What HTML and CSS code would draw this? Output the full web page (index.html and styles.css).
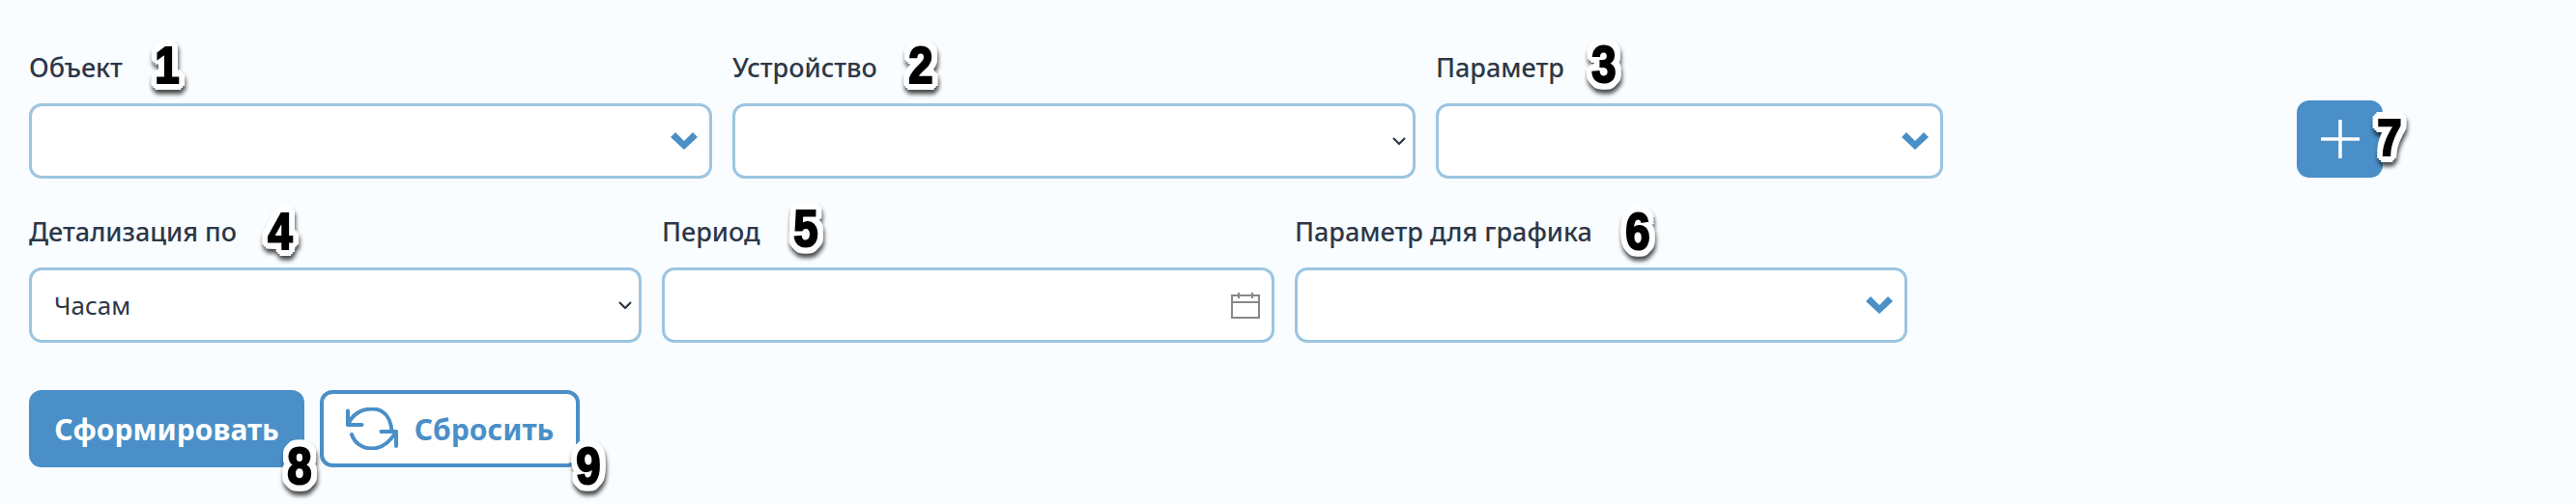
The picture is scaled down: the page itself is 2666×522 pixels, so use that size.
FILE: index.html
```html
<!DOCTYPE html>
<html lang="ru">
<head>
  <meta charset="UTF-8">
  <title>Отчёт</title>
  <link rel="stylesheet" href="styles.css">
</head>
<body>
  <main class="page">
    <!-- Row 1 -->
    <div class="row row-first">
      <div class="field field-wide">
        <label>Объект</label>
        <div class="box">
          <svg class="chevron" viewBox="0 0 28 18"><polygon points="0,5 5,0 14,9 23,0 28,5 14,18"/></svg>
        </div>
      </div>
      <div class="field field-wide">
        <label>Устройство</label>
        <div class="box box-native">
          <svg class="chevron-small" viewBox="0 0 14 8"><polyline points="1,1 7,7 13,1"/></svg>
        </div>
      </div>
      <div class="field field-param">
        <label>Параметр</label>
        <div class="box">
          <svg class="chevron" viewBox="0 0 28 18"><polygon points="0,5 5,0 14,9 23,0 28,5 14,18"/></svg>
        </div>
      </div>
      <button class="btn-add" type="button">
        <svg viewBox="0 0 40 40"><path d="M20 1V39M1 20H39"/></svg>
      </button>
    </div>

    <!-- Row 2 -->
    <div class="row">
      <div class="field field-mid">
        <label>Детализация по</label>
        <div class="box box-native">
          <span>Часам</span>
          <svg class="chevron-small" viewBox="0 0 14 8"><polyline points="1,1 7,7 13,1"/></svg>
        </div>
      </div>
      <div class="field field-mid">
        <label>Период</label>
        <div class="box box-date">
          <svg class="calendar" viewBox="0 0 30 28"><path d="M1 4H29V27H1ZM1 11H29M8 1V7M22 1V7"/></svg>
        </div>
      </div>
      <div class="field field-mid">
        <label>Параметр для графика</label>
        <div class="box">
          <svg class="chevron" viewBox="0 0 28 18"><polygon points="0,5 5,0 14,9 23,0 28,5 14,18"/></svg>
        </div>
      </div>
    </div>

    <!-- Buttons -->
    <div class="actions">
      <button class="btn btn-primary" type="button">Сформировать</button>
      <button class="btn btn-outline" type="button">
        <svg class="reset-icon" viewBox="0 0 54 44">
          <path d="M2 3.5V18H16.5M2 18C6 8 15 1.5 27 1.5C38 1.5 46 9 47.5 24M6 28C9 37 17 42.5 27 42.5C37 42.5 46 35 52 25M36.5 25H52V40"/>
        </svg>
        Сбросить
      </button>
    </div>

    <!-- Numbered callouts over the form -->
    <span class="badge badge-1">1</span>
    <span class="badge badge-2">2</span>
    <span class="badge badge-3">3</span>
    <span class="badge badge-4">4</span>
    <span class="badge badge-5">5</span>
    <span class="badge badge-6">6</span>
    <span class="badge badge-7">7</span>
    <span class="badge badge-8">8</span>
    <span class="badge badge-9">9</span>
  </main>
</body>
</html>
```

FILE: styles.css
```css
/* General Styles */
html, body {
  margin: 0;
  padding: 0;
  height: 100%;
  background: #f9fdff;
}
body {
  font-family: "Noto Sans", sans-serif;
  color: #2d3748;
  overflow: hidden;
}
.page {
  position: relative;
  padding: 52px 0 0 30px;
}
.row {
  display: flex;
  gap: 21px;
  margin-bottom: 37px;
}
label {
  display: block;
  font-size: 27px;
  font-weight: 500;
  line-height: 36px;
  margin-bottom: 19px;
}
.field-wide {
  width: 707px;
}
.field-param {
  width: 525px;
}
.field-mid {
  width: 634px;
}
.box {
  box-sizing: border-box;
  height: 78px;
  display: flex;
  align-items: center;
  justify-content: flex-end;
  padding: 0 12px;
  background: #fff;
  border: 3px solid #9cc5e1;
  border-radius: 13px;
  font-size: 26px;
}
.box-native {
  justify-content: space-between;
  padding: 0 7px 0 23px;
}
.box-date {
  padding-right: 12px;
}
.chevron {
  width: 28px;
  height: 18px;
  fill: #4a8fc7;
}
.chevron-small {
  width: 14px;
  height: 8px;
  margin-left: auto;
  fill: none;
  stroke: #2d3748;
  stroke-width: 2.2;
}
.calendar {
  width: 30px;
  height: 28px;
  fill: none;
  stroke: #888;
  stroke-width: 2;
}

/* Buttons */
.btn-add {
  display: flex;
  align-items: center;
  justify-content: center;
  width: 89px;
  height: 80px;
  margin: auto 0 1px 345px;
  padding: 0;
  background: #4a8fc7;
  border: none;
  border-radius: 13px;
}
.btn-add svg {
  width: 40px;
  height: 40px;
  fill: none;
  stroke: #fff;
  stroke-width: 3.5;
  stroke-linecap: round;
}
.actions {
  display: flex;
  gap: 16px;
  margin-top: 49px;
}
.btn {
  box-sizing: border-box;
  display: flex;
  align-items: center;
  justify-content: center;
  height: 80px;
  padding: 0;
  border-radius: 13px;
  font-family: inherit;
  font-size: 30px;
  font-weight: 700;
}
.btn-primary {
  width: 285px;
  background: #4a8fc7;
  border: none;
  color: #fff;
}
.btn-outline {
  width: 269px;
  gap: 17px;
  background: #fff;
  border: 4px solid #4a8fc7;
  color: #4a8fc7;
}
.reset-icon {
  width: 54px;
  height: 44px;
  fill: none;
  stroke: #4a8fc7;
  stroke-width: 4;
  stroke-linecap: round;
  stroke-linejoin: round;
}

/* Callouts */
.badge {
  position: absolute;
  transform: translate(-50%, -50%) scale(0.95, 1.1);
  font-family: "Liberation Sans", sans-serif;
  font-size: 48px;
  font-weight: 700;
  line-height: 1;
  color: #000;
  -webkit-text-stroke: 2px #000;
  text-shadow:
    7px 0 0 #fff, -7px 0 0 #fff, 0 7px 0 #fff, 0 -7px 0 #fff,
    5px 5px 0 #fff, -5px 5px 0 #fff, 5px -5px 0 #fff, -5px -5px 0 #fff,
    7px 3px 0 #fff, -7px 3px 0 #fff, 7px -3px 0 #fff, -7px -3px 0 #fff,
    3px 7px 0 #fff, -3px 7px 0 #fff, 3px -7px 0 #fff, -3px -7px 0 #fff;
  filter: drop-shadow(1px 4px 2px rgba(0, 0, 0, 0.7));
}
.badge-1 { left: 173px; top: 68px; }
.badge-2 { left: 953px; top: 68px; }
.badge-3 { left: 1660px; top: 67px; }
.badge-4 { left: 290px; top: 240px; }
.badge-5 { left: 834px; top: 237px; }
.badge-6 { left: 1695px; top: 240px; }
.badge-7 { left: 2473px; top: 143px; }
.badge-8 { left: 310px; top: 483px; }
.badge-9 { left: 609px; top: 483px; }
```
